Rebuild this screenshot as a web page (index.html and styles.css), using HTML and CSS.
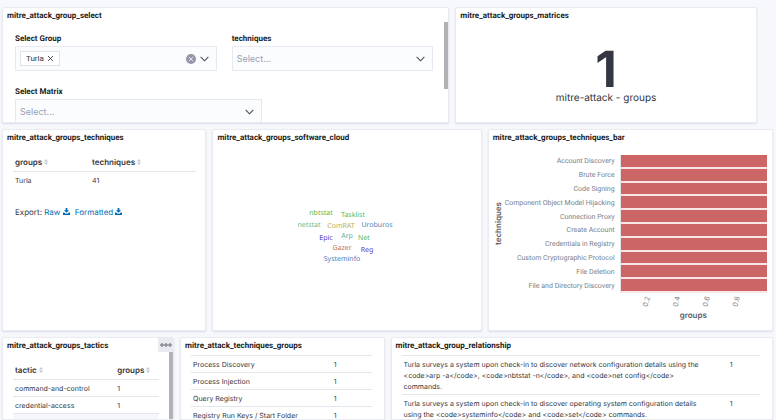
FILE: index.html
```html
<!DOCTYPE html>
<html lang="en">
<head>
<meta charset="utf-8">
<title>MITRE ATT&amp;CK groups</title>
<link rel="stylesheet" href="styles.css">
</head>
<body>
<svg class="sprite" aria-hidden="true">
  <symbol id="chevron" viewBox="0 0 10 6"><path d="M1 1l4 4 4-4" fill="none" stroke="currentColor" stroke-width="1.2" stroke-linecap="round" stroke-linejoin="round"/></symbol>
  <symbol id="cross" viewBox="0 0 8 8"><path d="M1.5 1.5l5 5M6.5 1.5l-5 5" fill="none" stroke="currentColor" stroke-width="1" stroke-linecap="round"/></symbol>
  <symbol id="sort" viewBox="0 0 4 6"><path d="M2 0l2 2.4H0zM2 6l2-2.4H0z" fill="currentColor"/></symbol>
  <symbol id="download" viewBox="0 0 16 16"><path d="M6 0h4v5h4L8 11 2 5h4zM0 10h3l3 3h4l3-3h3v6H0z" fill="currentColor"/></symbol>
</svg>
<main class="dashboard">
  <section class="panel w28">
    <h2 class="title">mitre_attack_group_select</h2>
    <form class="controls">
      <div class="field">
        <label for="group">Select Group</label>
        <div class="control">
          <button type="button" class="chip">Turla <svg><use href="#cross"/></svg></button>
          <input id="group" type="text">
          <button type="button" class="clear" aria-label="Clear"><svg><use href="#cross"/></svg></button>
          <svg class="chevron"><use href="#chevron"/></svg>
        </div>
      </div>
      <div class="field">
        <label for="techniques">techniques</label>
        <div class="control">
          <select id="techniques"><option>Select...</option></select>
          <svg class="chevron"><use href="#chevron"/></svg>
        </div>
      </div>
      <div class="field wide">
        <label for="matrix">Select Matrix</label>
        <div class="control">
          <select id="matrix"><option>Select...</option></select>
          <svg class="chevron"><use href="#chevron"/></svg>
        </div>
      </div>
    </form>
    <span class="scrollbar"></span>
  </section>

  <section class="panel w19">
    <h2 class="title">mitre_attack_groups_matrices</h2>
    <div class="metric">
      <strong>1</strong>
      <span>mitre-attack - groups</span>
    </div>
  </section>

  <section class="panel w13 row-start">
    <h2 class="title">mitre_attack_groups_techniques</h2>
    <div class="body">
      <table class="data">
        <thead><tr><th class="c42">groups <svg><use href="#sort"/></svg></th><th>techniques <svg><use href="#sort"/></svg></th></tr></thead>
        <tbody><tr><td>Turla</td><td>41</td></tr></tbody>
      </table>
      <p class="export">Export: <a href="#">Raw <svg><use href="#download"/></svg></a> <a href="#">Formatted <svg><use href="#download"/></svg></a></p>
    </div>
  </section>

  <section class="panel w17">
    <h2 class="title">mitre_attack_groups_software_cloud</h2>
    <div class="cloud">
      <svg width="100" height="60" viewBox="0 0 100 60">
        <text x="24" y="7" fill="#57b84c">nbtstat</text>
        <text x="56" y="9" fill="#4fbb63">Tasklist</text>
        <text x="12" y="19" fill="#57c19b">netstat</text>
        <text x="44" y="20" fill="#b9b04f">ComRAT</text>
        <text x="80" y="19" fill="#4f88b5">Uroburos</text>
        <text x="29" y="32" fill="#5a36c4">Epic</text>
        <text x="50" y="30" fill="#4fae9f">Arp</text>
        <text x="67" y="32" fill="#57b85c">Net</text>
        <text x="45" y="42" fill="#c0744d">Gazer</text>
        <text x="70" y="44" fill="#5a40c4">Reg</text>
        <text x="45" y="53" fill="#4f7ab8">Systeminfo</text>
      </svg>
    </div>
  </section>

  <section class="panel w18">
    <h2 class="title">mitre_attack_groups_techniques_bar</h2>
    <div class="chart">
      <div class="y-title">techniques</div>
      <ul class="y-labels">
        <li>Account Discovery</li><li>Brute Force</li><li>Code Signing</li><li>Component Object Model Hijacking</li><li>Connection Proxy</li><li>Create Account</li><li>Credentials in Registry</li><li>Custom Cryptographic Protocol</li><li>File Deletion</li><li>File and Directory Discovery</li>
      </ul>
      <div class="bars"><i></i><i></i><i></i><i></i><i></i><i></i><i></i><i></i><i></i><i></i></div>
      <div class="x-ticks"><span>0.2</span><span>0.4</span><span>0.6</span><span>0.8</span></div>
      <div class="x-title">groups</div>
    </div>
  </section>

  <section class="panel w11 row-start">
    <h2 class="title">mitre_attack_groups_tactics</h2>
    <button type="button" class="menu" aria-label="Panel options"><svg viewBox="0 0 12 4"><g fill="#fff" stroke="#555a64" stroke-width="1"><circle cx="2" cy="2" r="1.200"/><circle cx="6" cy="2" r="1.200"/><circle cx="10" cy="2" r="1.200"/></g></svg></button>
    <div class="body narrow">
      <table class="data">
        <thead><tr><th class="c70">tactic <svg><use href="#sort"/></svg></th><th>groups <svg><use href="#sort"/></svg></th></tr></thead>
        <tbody>
          <tr><td>command-and-control</td><td>1</td></tr>
          <tr><td>credential-access</td><td>1</td></tr>
          <tr class="shaded"><td></td><td></td></tr>
        </tbody>
      </table>
    </div>
    <span class="scrollbar long"></span>
  </section>

  <section class="panel w13">
    <h2 class="title">mitre_attack_techniques_groups</h2>
    <div class="body scrolled">
      <table class="data">
        <tbody>
          <tr><td class="c78">Process Discovery</td><td>1</td></tr>
          <tr><td>Process Injection</td><td>1</td></tr>
          <tr><td>Query Registry</td><td>1</td></tr>
          <tr><td>Registry Run Keys / Start Folder</td><td>1</td></tr>
        </tbody>
      </table>
    </div>
  </section>

  <section class="panel w24">
    <h2 class="title">mitre_attack_group_relationship</h2>
    <div class="body scrolled">
      <table class="data prose">
        <tbody>
          <tr><td class="c91">Turla surveys a system upon check-in to discover network configuration details using the &lt;code&gt;arp -a&lt;/code&gt;, &lt;code&gt;nbtstat -n&lt;/code&gt;, and &lt;code&gt;net config&lt;/code&gt; commands.</td><td>1</td></tr>
          <tr><td>Turla surveys a system upon check-in to discover operating system configuration details using the &lt;code&gt;systeminfo&lt;/code&gt; and &lt;code&gt;set&lt;/code&gt; commands.</td><td>1</td></tr>
        </tbody>
      </table>
    </div>
  </section>
</main>
</body>
</html>
```
FILE: styles.css
```css
* { box-sizing: border-box; }
html, body { height: 100%; }
body {
  margin: 0;
  overflow: hidden;
  background: #f7f8fc;
  color: #343741;
  font: 7px/11px Inter, "Liberation Sans", sans-serif;
  text-rendering: geometricPrecision;
}
button, input, select { font: inherit; color: inherit; }
.sprite { position: absolute; width: 0; height: 0; }

.dashboard {
  display: grid;
  grid-template-columns: repeat(48, minmax(0, 1fr));
  grid-template-rows: 116px 202px minmax(0, 1fr);
  gap: 6px;
  height: 100%;
  padding: 7px 3px 0 2px;
}
.panel {
  position: relative;
  display: flex;
  flex-direction: column;
  min-height: 0;
  overflow: hidden;
  background: #fff;
  border: 1px solid #e9ebf1;
  border-radius: 2px;
  box-shadow: 0 1px 2px #d8dce6;
}
.row-start { grid-column-start: 1; }
.w11 { grid-column-end: span 11; }
.w13 { grid-column-end: span 13; }
.w17 { grid-column-end: span 17; }
.w18 { grid-column-end: span 18; }
.w19 { grid-column-end: span 19; }
.w24 { grid-column-end: span 24; }
.w28 { grid-column-end: span 28; }

.title, .field label, .y-labels, .chip {
  font-family: Roboto, Inter, sans-serif;
}
.title {
  flex: none;
  margin: 0;
  padding: 2px 4px;
  color: #1a1c21;
  font-size: 8px;
  font-weight: 700;
  line-height: 11px;
}

.controls {
  display: grid;
  grid-template-columns: 1fr 1fr;
  gap: 15px;
  padding: 10px 15px 0 12px;
}
.field label {
  display: block;
  margin-bottom: 2px;
  color: #1a1c21;
  font-size: 8px;
  font-weight: 700;
}
.wide { grid-column: 1 / -1; width: 59%; }
.control {
  position: relative;
  display: flex;
  align-items: center;
  height: 25px;
  padding: 0 7px 0 4px;
  background: #fbfcfe;
  border: 1px solid #e6e9f0;
}
.control select {
  flex: 1;
  appearance: none;
  padding: 0;
  border: 0;
  background: none;
  color: #98a2b3;
  font-size: 9px;
}
.control input { flex: 1; min-width: 0; border: 0; background: none; }
.chip {
  display: flex;
  align-items: center;
  gap: 3px;
  height: 15px;
  padding: 0 5px;
  border: 1px solid #dfe3eb;
  background: #fff;
  font-size: 8px;
}
.chip svg { width: 7px; height: 7px; }
.clear {
  display: flex;
  align-items: center;
  justify-content: center;
  width: 10px;
  height: 10px;
  margin-right: 4px;
  padding: 0;
  border: 0;
  border-radius: 50%;
  background: #9296a8;
  color: #fff;
}
.clear svg { width: 6px; height: 6px; }
.chevron { width: 9px; height: 6px; color: #4a4e59; }

.scrollbar {
  position: absolute;
  top: 14px;
  right: 0;
  width: 4px;
  height: 67px;
  background: #b0b2b6;
}
.scrollbar.long { height: 100%; }

.metric {
  flex: 1;
  display: flex;
  flex-direction: column;
  align-items: center;
  justify-content: center;
  padding-top: 5px;
  font-size: 10px;
  line-height: 10px;
}
.metric strong { font-size: 50px; line-height: 46px; }

.body { padding: 9px 9px 0 10px; }
.body.narrow { padding-right: 14px; }
.body.scrolled { padding: 2px 12px 0 10px; }
.data { width: 100%; border-collapse: collapse; table-layout: fixed; }
.data th, .data td { height: 17px; padding: 3px 2px 2px; text-align: left; vertical-align: top; }
.data th { font-size: 8px; font-weight: 600; white-space: nowrap; }
.data td { border-top: 1px solid #e3e6ec; }
.data th svg { width: 4px; height: 6px; color: #c4c8d0; }
.shaded { background: #f5f7fa; }
.prose td:first-child { padding-right: 14px; }
.c42 { width: 42%; }
.c70 { width: 70%; }
.c78 { width: 78%; }
.c91 { width: 91%; }

.export { margin: 19px 0 0 2px; font-size: 8px; }
.export a { margin-right: 3px; color: #006bb4; text-decoration: none; }
.export svg { width: 7px; height: 7px; }

.cloud { flex: 1; display: flex; align-items: center; justify-content: center; }
.cloud text { font: 7px "Noto Sans", sans-serif; text-anchor: middle; }

.chart {
  display: grid;
  grid-template-columns: 12px auto 1fr;
  grid-template-rows: 138px 16px 12px;
  padding: 10px 5px 0 4px;
  color: #7b7f88;
}
.y-title {
  align-self: center;
  justify-self: center;
  writing-mode: vertical-rl;
  transform: rotate(180deg);
  color: #5a5d68;
  font-size: 8px;
  font-weight: 600;
}
.y-labels, .bars {
  display: grid;
  grid-template-rows: repeat(10, 1fr);
  margin: 0;
  padding: 0;
  list-style: none;
}
.y-labels { padding-right: 5px; text-align: right; align-items: center; }
.bars { border-left: 1px solid #e0e2e8; }
.bars i { border-bottom: 2px solid #f8e6e6; background: #cc6666; }
.x-ticks {
  grid-column: 3;
  display: flex;
  justify-content: space-around;
  align-items: center;
  padding: 0 16px 0 12px;
}
.x-ticks span { transform: rotate(-75deg); }
.x-title { grid-column: 3; align-self: end; text-align: center; color: #5a5d68; font-size: 8px; font-weight: 600; }

.menu {
  position: absolute;
  top: 0;
  right: 0;
  z-index: 1;
  display: flex;
  align-items: center;
  justify-content: center;
  width: 15px;
  height: 14px;
  padding: 0;
  border: 0;
  background: #e9ebf1;
}
.menu svg { width: 12px; height: 4px; }
```
